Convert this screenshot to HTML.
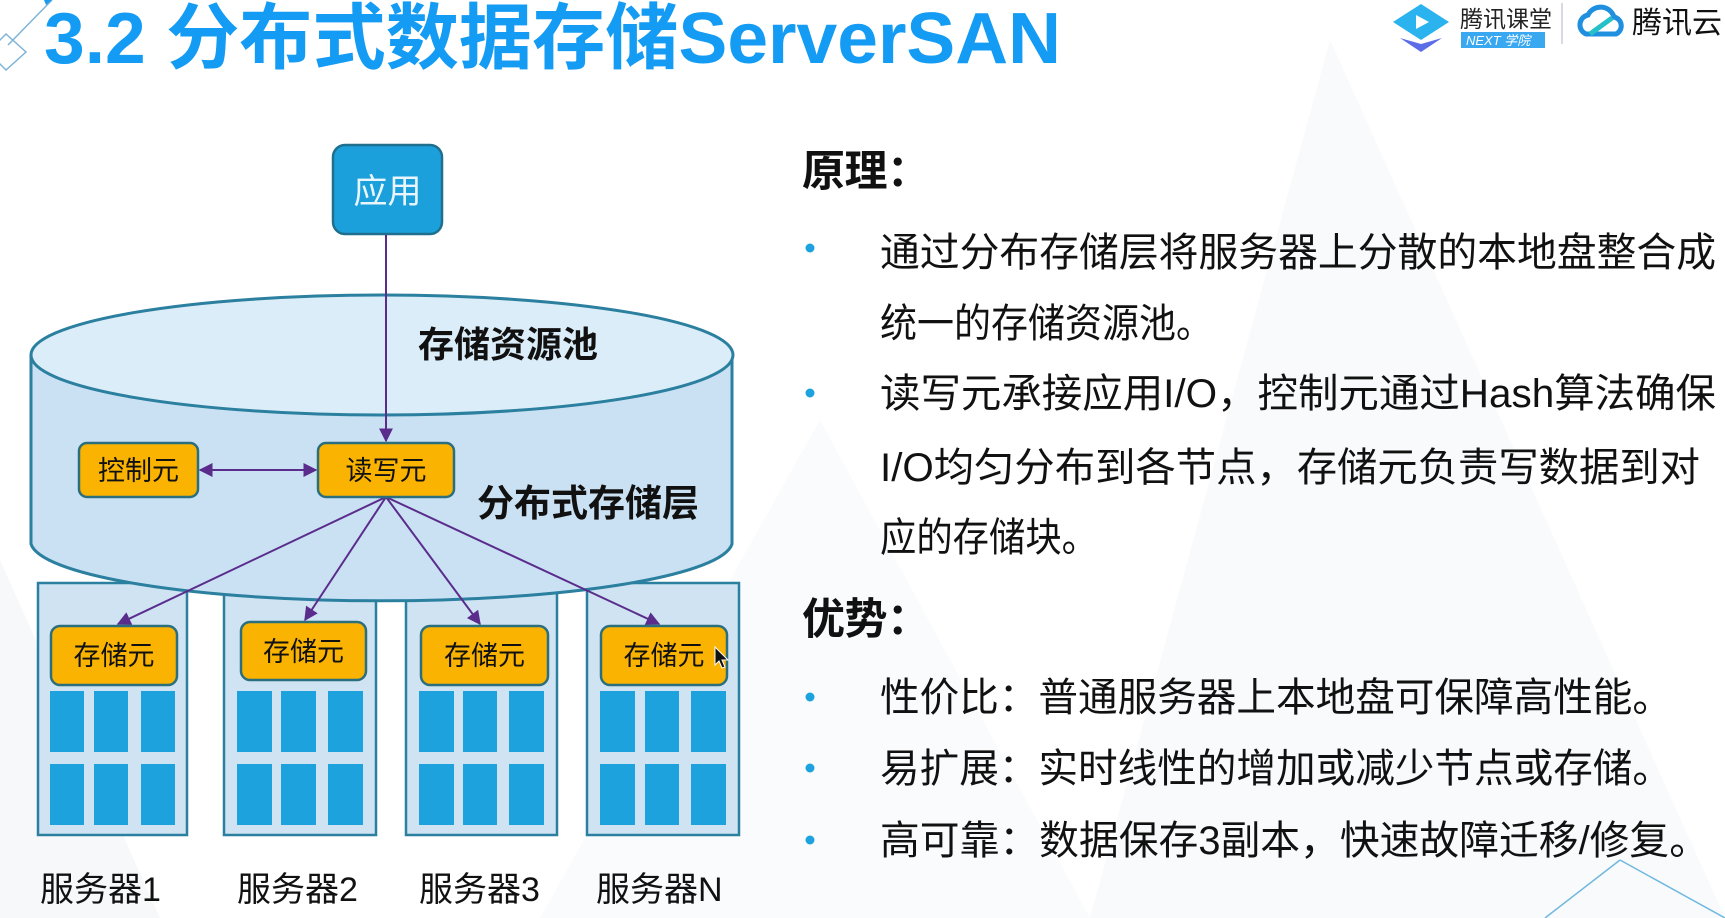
<!DOCTYPE html>
<html><head><meta charset="utf-8">
<style>
html,body{margin:0;padding:0;background:#fff;}
body{width:1725px;height:918px;overflow:hidden;}
svg{display:block;}
.cjk{font-family:"Liberation Sans","Noto Sans CJK SC",sans-serif;}
</style></head>
<body>
<svg width="1725" height="918" viewBox="0 0 1725 918" xmlns="http://www.w3.org/2000/svg" class="cjk">
<defs>
<marker id="ah" viewBox="0 0 10 10" refX="9" refY="5" markerWidth="7" markerHeight="7" orient="auto-start-reverse">
<path d="M0,0 L10,5 L0,10 z" fill="#5a2d8c"/>
</marker>
</defs>
<polygon points="1090,918 1330,40 1725,918" fill="#f9fafb"/>
<polygon points="0,560 160,918 0,918" fill="#f7f8fa"/>
<polygon points="540,918 820,420 1090,918" fill="#fafbfc"/>
<line x1="1545" y1="918" x2="1620" y2="860" stroke="#6fb8e0" stroke-width="1.5"/>
<line x1="1620" y1="860" x2="1725" y2="918" stroke="#6fb8e0" stroke-width="1.5"/>

<g stroke="#7fb4d8" stroke-width="1.5" fill="none">
<line x1="8" y1="45" x2="52" y2="0"/>
<polygon points="6,34 26,52 6,70 -12,52"/>
</g>
<polygon points="44,0 52,0 46,5" fill="#1a9bf0"/>
<text x="44" y="63" font-size="72" font-weight="bold" fill="#149bf3" textLength="1017" lengthAdjust="spacingAndGlyphs">3.2 分布式数据存储ServerSAN</text>

<g>
<polygon points="1393,22 1421,4 1449,22 1421,40" fill="#2ab3ef"/>
<polygon points="1400,38 1421,52 1442,38 1421,44" fill="#5b6ee8"/>
<polygon points="1416,15 1429,22 1416,29" fill="#fff"/>
<text x="1460" y="27" font-size="23" fill="#222">腾讯课堂</text>
<rect x="1461" y="32" width="84" height="16" fill="#3aa8f0"/>
<text x="1466" y="45" font-size="13" font-style="italic" fill="#fff">NEXT 学院</text>
<line x1="1562" y1="3" x2="1562" y2="44" stroke="#ccd" stroke-width="1.5"/>
<path d="M1586,34 a10,10 0 0 1 2,-19 a14,14 0 0 1 26,2 a9,9 0 0 1 2,17 z" fill="none" stroke="#1f8fe0" stroke-width="5"/>
<path d="M1590,34 L1612,18" stroke="#26c0c8" stroke-width="5"/>
<text x="1632" y="33" font-size="30" fill="#111">腾讯云</text>
</g>

<g stroke="#2b7f9f" stroke-width="2.5" fill="#cfe3f3">
<rect x="38" y="583" width="149" height="252"/>
<rect x="224" y="583" width="152" height="252"/>
<rect x="406" y="583" width="151" height="252"/>
<rect x="587" y="583" width="152" height="252"/>
</g>
<g fill="#1ea2dd">
<rect x="50" y="691" width="34" height="61"/><rect x="94" y="691" width="34" height="61"/><rect x="141" y="691" width="34" height="61"/>
<rect x="50" y="764" width="34" height="61"/><rect x="94" y="764" width="34" height="61"/><rect x="141" y="764" width="34" height="61"/>
<rect x="237" y="691" width="35" height="61"/><rect x="281" y="691" width="35" height="61"/><rect x="328" y="691" width="35" height="61"/>
<rect x="237" y="764" width="35" height="61"/><rect x="281" y="764" width="35" height="61"/><rect x="328" y="764" width="35" height="61"/>
<rect x="419" y="691" width="35" height="61"/><rect x="463" y="691" width="34" height="61"/><rect x="509" y="691" width="35" height="61"/>
<rect x="419" y="764" width="35" height="61"/><rect x="463" y="764" width="34" height="61"/><rect x="509" y="764" width="35" height="61"/>
<rect x="600" y="691" width="35" height="61"/><rect x="645" y="691" width="34" height="61"/><rect x="691" y="691" width="35" height="61"/>
<rect x="600" y="764" width="35" height="61"/><rect x="645" y="764" width="34" height="61"/><rect x="691" y="764" width="35" height="61"/>
</g>

<path d="M31,355 L31,544 A351,60 0 0 0 732,544 L732,355 Z" fill="#cae1f3" stroke="#2b7f9f" stroke-width="3"/>
<ellipse cx="382" cy="355" rx="351" ry="60" fill="#dbedf8" stroke="#2b7f9f" stroke-width="3"/>
<text x="418" y="357" font-size="36" font-weight="bold" fill="#111">存储资源池</text>
<text x="477" y="516" font-size="37" font-weight="bold" fill="#111">分布式存储层</text>

<rect x="333" y="145" width="109" height="89" rx="12" fill="#1ba0dc" stroke="#1f6f8e" stroke-width="2.5"/>
<text x="387.5" y="203" font-size="34" fill="#eaf6fd" text-anchor="middle">应用</text>

<g stroke="#5a2d8c" stroke-width="2" fill="none">
<line x1="386" y1="235" x2="386" y2="441" marker-end="url(#ah)"/>
<line x1="200" y1="470" x2="316" y2="470" marker-start="url(#ah)" marker-end="url(#ah)"/>
<line x1="386" y1="497" x2="118" y2="624" marker-end="url(#ah)"/>
<line x1="386" y1="497" x2="305" y2="620" marker-end="url(#ah)"/>
<line x1="386" y1="497" x2="480" y2="624" marker-end="url(#ah)"/>
<line x1="386" y1="497" x2="659" y2="624" marker-end="url(#ah)"/>
</g>

<g fill="#f9b300" stroke="#2b6f7f" stroke-width="2.5">
<rect x="79" y="443" width="119" height="54" rx="8"/>
<rect x="318" y="443" width="136" height="54" rx="8"/>
<rect x="51" y="626" width="126" height="59" rx="9"/>
<rect x="241" y="622" width="125" height="58" rx="9"/>
<rect x="421" y="626" width="127" height="59" rx="9"/>
<rect x="601" y="626" width="126" height="59" rx="9"/>
</g>
<g font-size="27" fill="#111" text-anchor="middle">
<text x="138.5" y="480">控制元</text>
<text x="386" y="480">读写元</text>
<text x="114" y="665">存储元</text>
<text x="303.5" y="661">存储元</text>
<text x="484.5" y="665">存储元</text>
<text x="664" y="665">存储元</text>
</g>
<path d="M715,647 l0,18 l4,-4 l3,7 l3,-1 l-3,-7 l6,0 z" fill="#111" stroke="#fff" stroke-width="1"/>

<g font-size="34" fill="#111">
<text x="40" y="901">服务器1</text>
<text x="237" y="901">服务器2</text>
<text x="419" y="901">服务器3</text>
<text x="596" y="901">服务器N</text>
</g>

<g fill="#111">
<text x="802" y="186" font-size="43" font-weight="bold" textLength="128">原理：</text>
<text x="802" y="634" font-size="43" font-weight="bold" textLength="128">优势：</text>
<g font-size="40">
<text x="880" y="266" textLength="836" lengthAdjust="spacingAndGlyphs">通过分布存储层将服务器上分散的本地盘整合成</text>
<text x="880" y="337" textLength="333" lengthAdjust="spacingAndGlyphs">统一的存储资源池。</text>
<text x="880" y="407" textLength="836" lengthAdjust="spacingAndGlyphs">读写元承接应用I/O，控制元通过Hash算法确保</text>
<text x="880" y="481" textLength="820" lengthAdjust="spacingAndGlyphs">I/O均匀分布到各节点，存储元负责写数据到对</text>
<text x="880" y="551" textLength="218" lengthAdjust="spacingAndGlyphs">应的存储块。</text>
<text x="880" y="711" textLength="792" lengthAdjust="spacingAndGlyphs">性价比：普通服务器上本地盘可保障高性能。</text>
<text x="880" y="782" textLength="792" lengthAdjust="spacingAndGlyphs">易扩展：实时线性的增加或减少节点或存储。</text>
<text x="880" y="854" textLength="829" lengthAdjust="spacingAndGlyphs">高可靠：数据保存3副本，快速故障迁移/修复。</text>
</g>
</g>
<g fill="#1ea2dd">
<circle cx="810" cy="248" r="4.5"/>
<circle cx="810" cy="393" r="4.5"/>
<circle cx="810" cy="697" r="4.5"/>
<circle cx="810" cy="768" r="4.5"/>
<circle cx="810" cy="840" r="4.5"/>
</g>
</svg>
</body></html>
